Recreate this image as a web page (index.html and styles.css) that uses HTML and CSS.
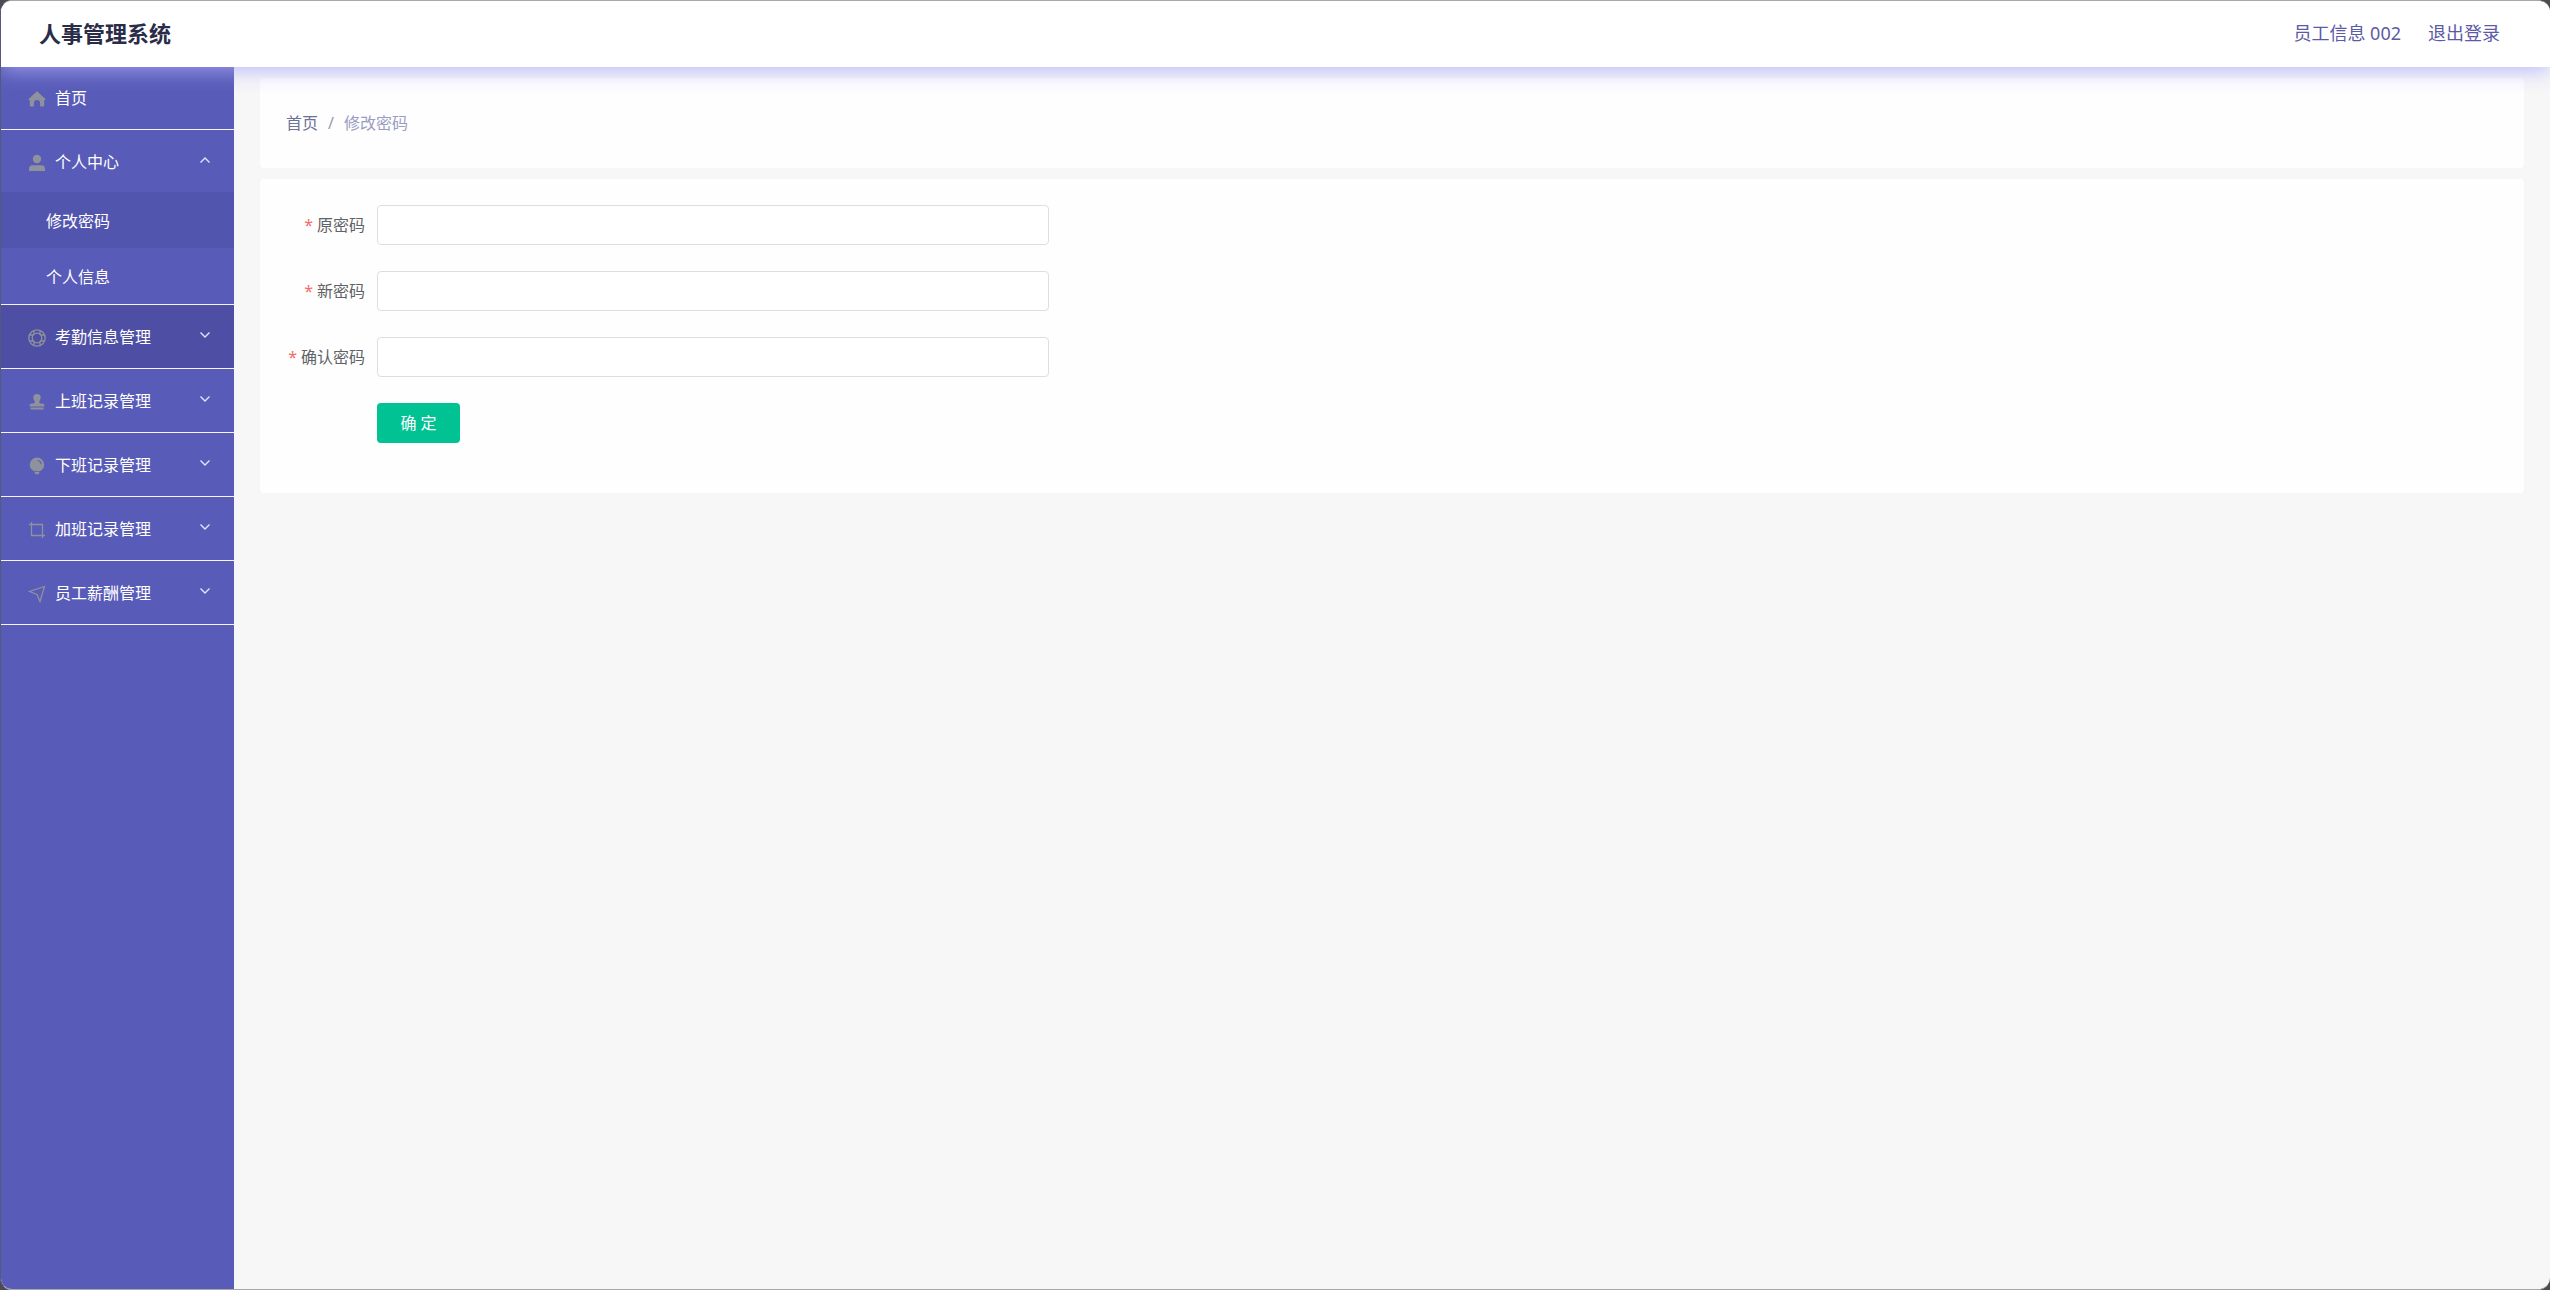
FILE: index.html
```html
<!DOCTYPE html>
<html lang="zh-CN">
<head>
<meta charset="utf-8">
<meta name="viewport" content="width=device-width, initial-scale=1">
<title>人事管理系统</title>
<link rel="stylesheet" href="styles.css">
</head>
<body>
<div class="app">
  <header class="header">
    <h1 class="title">人事管理系统</h1>
    <div class="user">
      <a href="#profile">员工信息 002</a>
      <a href="#logout">退出登录</a>
    </div>
  </header>
  <div class="body">
    <nav class="sidebar">
      <ul class="menu">
        <li class="menu-item">
          <a class="menu-link" href="#home">
            <svg class="icon" viewBox="0 0 18 18"><path fill="currentColor" d="M9 1.200 17.200 8.800c.6.600.2 1.300-.5 1.300h-.5V15c0 .9-.5 1.500-1.400 1.500h-2.700v-3.600c0-1.700-1.300-2.900-3.100-2.900s-3.100 1.200-3.100 2.900v3.600H3.200c-.9 0-1.400-.6-1.400-1.500v-4.900h-.5c-.7 0-1.100-.7-.5-1.300z"/></svg>
            <span>首页</span>
          </a>
        </li>
        <li class="menu-item">
          <button class="menu-link open" type="button" aria-expanded="true">
            <svg class="icon" viewBox="0 0 18 18"><circle cx="9" cy="5" r="4.200" fill="currentColor"/><path fill="currentColor" d="M1 17v-2.300c0-2 1.300-3.400 3.200-3.400h9.600c1.900 0 3.200 1.400 3.200 3.400V17z"/></svg>
            <span>个人中心</span>
            <svg class="arrow" viewBox="0 0 12 12"><path d="M1.500 8.500 6 4l4.500 4.500"/></svg>
          </button>
          <ul class="submenu">
            <li><a class="submenu-link active" href="#password">修改密码</a></li>
            <li><a class="submenu-link" href="#info">个人信息</a></li>
          </ul>
        </li>
        <li class="menu-item">
          <button class="menu-link closed hover" type="button" aria-expanded="false">
            <svg class="icon line" viewBox="0 0 18 18"><circle cx="9" cy="9" r="8.200"/><circle cx="9" cy="9" r="4.800"/><path d="M6 1.500v4M12 1.500v4M6 12.500v4M12 12.500v4M1.500 6h4M1.500 12h4M12.500 6h4M12.500 12h4"/></svg>
            <span>考勤信息管理</span>
            <svg class="arrow" viewBox="0 0 12 12"><path d="M1.500 3.500 6 8l4.500-4.500"/></svg>
          </button>
        </li>
        <li class="menu-item">
          <button class="menu-link closed" type="button" aria-expanded="false">
            <svg class="icon" viewBox="0 0 18 18"><path fill="currentColor" d="M9 1a3.800 3.800 0 0 1 3.800 3.800c0 1.600-1.600 2.700-1.600 4.300 0 .9.500 1.400 1.400 1.400h1.700c1.400 0 2.200.8 2.200 2.500v.5h-15V13c0-1.700.8-2.500 2.200-2.500h1.700c.9 0 1.400-.5 1.400-1.400 0-1.600-1.600-2.700-1.600-4.300A3.800 3.800 0 0 1 9 1zM2.500 14.500h13v2h-13z"/></svg>
            <span>上班记录管理</span>
            <svg class="arrow" viewBox="0 0 12 12"><path d="M1.500 3.500 6 8l4.500-4.500"/></svg>
          </button>
        </li>
        <li class="menu-item">
          <button class="menu-link closed" type="button" aria-expanded="false">
            <svg class="icon" viewBox="0 0 18 18"><path fill="currentColor" fill-rule="evenodd" d="M9 .500a7.300 7.300 0 0 1 7.300 7.300c0 3-1.900 5.200-4.300 6.500H6c-2.400-1.300-4.300-3.500-4.300-6.500A7.300 7.300 0 0 1 9 .500zM9.500 3v1c1.800.2 3 1.400 3.200 3.300h1C13.500 4.800 12 3.200 9.500 3zM6.300 15h5.400l-1.200 2.200h-3z"/></svg>
            <span>下班记录管理</span>
            <svg class="arrow" viewBox="0 0 12 12"><path d="M1.500 3.500 6 8l4.500-4.500"/></svg>
          </button>
        </li>
        <li class="menu-item">
          <button class="menu-link closed" type="button" aria-expanded="false">
            <svg class="icon line" viewBox="0 0 18 18"><path d="M3.500 1v13.500H17M1 3.500h13.500V17"/></svg>
            <span>加班记录管理</span>
            <svg class="arrow" viewBox="0 0 12 12"><path d="M1.500 3.500 6 8l4.500-4.500"/></svg>
          </button>
        </li>
        <li class="menu-item">
          <button class="menu-link closed" type="button" aria-expanded="false">
            <svg class="icon line" viewBox="0 0 18 18"><path d="M16.500 1.500 1.500 6.500l7.500 3 3 7z"/></svg>
            <span>员工薪酬管理</span>
            <svg class="arrow" viewBox="0 0 12 12"><path d="M1.500 3.500 6 8l4.500-4.500"/></svg>
          </button>
        </li>
      </ul>
    </nav>
    <main class="main">
      <nav class="card breadcrumb" aria-label="面包屑">
        <a class="crumb-home" href="#home">首页</a>
        <span class="crumb-sep">/</span>
        <span>修改密码</span>
      </nav>
      <form class="card form">
        <div class="row">
          <label class="label" for="old">原密码</label>
          <input class="input" id="old" type="password">
        </div>
        <div class="row">
          <label class="label" for="new">新密码</label>
          <input class="input" id="new" type="password">
        </div>
        <div class="row">
          <label class="label" for="confirm">确认密码</label>
          <input class="input" id="confirm" type="password">
        </div>
        <div class="row actions">
          <button class="submit" type="button">确 定</button>
        </div>
      </form>
    </main>
  </div>
</div>
</body>
</html>
```
FILE: styles.css
```css
* {
  box-sizing: border-box;
}

body {
  margin: 0;
  background: #4c4c50;
  font-family: "Noto Sans", "Noto Sans CJK SC", sans-serif;
  font-size: 16px;
  line-height: 24px;
}

a {
  color: inherit;
  text-decoration: none;
}

button,
input {
  font: inherit;
}

ul {
  margin: 0;
  padding: 0;
  list-style: none;
}

.app {
  display: flex;
  flex-direction: column;
  min-height: 100vh;
  overflow: hidden;
  border: 1px solid #a8a8a8;
  border-left-color: #56587e;
  border-right-width: 0;
  border-radius: 12px;
  background: #f7f7f7;
}

.header {
  position: relative;
  z-index: 1;
  display: flex;
  align-items: center;
  justify-content: space-between;
  height: 66px;
  padding: 0 50px 2px 38px;
  background: #fff;
  box-shadow: 0 3px 20px rgba(172, 170, 252, 0.85);
}

.title {
  margin: 0;
  color: #2b2c48;
  font-size: 22px;
  font-weight: 700;
  line-height: 32px;
}

.user {
  display: flex;
  gap: 27px;
  color: #5c5aa6;
  font-size: 18px;
}

.body {
  display: flex;
  flex: 1;
}

.sidebar {
  flex: none;
  width: 233px;
  background: #585bb7;
}

.menu-item {
  border-bottom: 1px solid #f4f4ff;
}

.menu-link {
  display: flex;
  align-items: center;
  width: 100%;
  height: 62px;
  padding: 0 23px 0 27px;
  border: 0;
  background: none;
  color: #fff;
  text-align: left;
}

.open {
  padding-top: 2px;
}

.closed {
  height: 63px;
}

.hover {
  background: #4d4ea4;
}

.icon {
  width: 18px;
  height: 18px;
  margin: 2px 9px 0 0;
  color: #8f919c;
}

.line {
  fill: none;
  stroke: currentColor;
  stroke-width: 1.3;
}

.arrow {
  width: 12px;
  height: 12px;
  margin: 0 0 4px auto;
  fill: none;
  stroke: #e4e4ff;
  stroke-width: 1.4;
}

.submenu-link {
  display: flex;
  align-items: center;
  height: 56px;
  padding: 2px 0 0 45px;
  color: #fff;
}

.active {
  background: #5255ae;
}

.main {
  display: flex;
  flex: 1;
  flex-direction: column;
  gap: 11px;
  min-width: 0;
  padding: 11px 26px 26px;
}

.card {
  border-radius: 4px;
  background: #fefefe;
}

.breadcrumb {
  display: flex;
  align-items: center;
  height: 90px;
  padding: 0 26px;
  color: #999dc4;
}

.crumb-home {
  color: #6e7296;
}

.crumb-sep {
  margin: 0 10px;
  color: #9a9aa6;
}

.form {
  display: flex;
  flex-direction: column;
  gap: 26px;
  padding: 26px 26px 50px;
}

.row {
  display: flex;
  align-items: center;
}

.label {
  flex: none;
  width: 91px;
  padding-right: 12px;
  color: #606266;
  text-align: right;
}

.label::before {
  content: "*";
  margin-right: 4px;
  color: #f56c6c;
}

.input {
  width: 672px;
  height: 40px;
  padding: 0 16px;
  border: 1px solid #dcdee2;
  border-radius: 4px;
  background: #fff;
}

.actions {
  padding-left: 91px;
}

.submit {
  width: 83px;
  height: 40px;
  padding: 0;
  border: 0;
  border-radius: 4px;
  background: #00c292;
  color: #fff;
}
```
